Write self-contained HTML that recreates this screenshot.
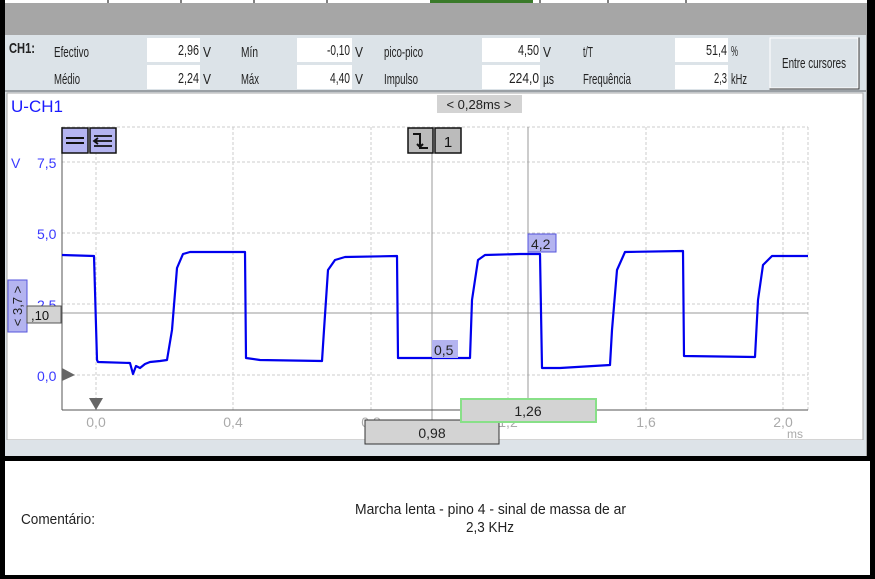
<!DOCTYPE html>
<html><head><meta charset="utf-8"><style>
body{margin:0;width:875px;height:579px;overflow:hidden;background:#fff}
svg{display:block}
.n{font-family:"Liberation Sans",sans-serif;font-size:15px;fill:#222}
.s{font-family:"Liberation Sans",sans-serif}
</style></head><body>
<svg width="875" height="579" viewBox="0 0 875 579" xmlns="http://www.w3.org/2000/svg">
<rect width="875" height="579" fill="#000"/>
<rect x="5" y="0" width="862" height="3" fill="#fff"/>
<g stroke="#000"><line x1="108" y1="0" x2="108" y2="3"/><line x1="181" y1="0" x2="181" y2="3"/><line x1="254" y1="0" x2="254" y2="3"/><line x1="327" y1="0" x2="327" y2="3"/><line x1="540" y1="0" x2="540" y2="3"/><line x1="608" y1="0" x2="608" y2="3"/><line x1="686" y1="0" x2="686" y2="3"/></g>
<rect x="430" y="0" width="103" height="3" fill="#3a7a2a"/>
<rect x="5" y="3" width="862" height="453" fill="#a6a6a6"/>
<rect x="5" y="35" width="861" height="421" fill="#dce3e8"/>
<rect x="5" y="90" width="861" height="2" fill="#9aa0a5"/>
<!-- panel -->
<text x="9" y="53" class="n" style="font-weight:bold" textLength="26" lengthAdjust="spacingAndGlyphs">CH1:</text>
<text x="54" y="57" class="n" textLength="35" lengthAdjust="spacingAndGlyphs">Efectivo</text><text x="54" y="84" class="n" textLength="26" lengthAdjust="spacingAndGlyphs">Médio</text>
<text x="241" y="57" class="n" textLength="17" lengthAdjust="spacingAndGlyphs">Mín</text><text x="241" y="84" class="n" textLength="18" lengthAdjust="spacingAndGlyphs">Máx</text>
<text x="384" y="57" class="n" textLength="39" lengthAdjust="spacingAndGlyphs">pico-pico</text><text x="384" y="84" class="n" textLength="34" lengthAdjust="spacingAndGlyphs">Impulso</text>
<text x="583" y="57" class="n" textLength="10" lengthAdjust="spacingAndGlyphs">t/T</text><text x="583" y="84" class="n" textLength="48" lengthAdjust="spacingAndGlyphs">Frequência</text>
<g fill="#fff"><rect x="147" y="38" width="53" height="24"/><rect x="147" y="65" width="53" height="24"/><rect x="297" y="38" width="55" height="24"/><rect x="297" y="65" width="55" height="24"/><rect x="482" y="38" width="58" height="24"/><rect x="482" y="65" width="58" height="24"/><rect x="675" y="38" width="53" height="24"/><rect x="675" y="65" width="53" height="24"/></g>
<g class="n" text-anchor="end"><text x="199" y="55" textLength="21" lengthAdjust="spacingAndGlyphs">2,96</text><text x="199" y="83" textLength="21" lengthAdjust="spacingAndGlyphs">2,24</text><text x="350" y="55" textLength="23" lengthAdjust="spacingAndGlyphs">-0,10</text><text x="350" y="83" textLength="20" lengthAdjust="spacingAndGlyphs">4,40</text><text x="539" y="55" textLength="21" lengthAdjust="spacingAndGlyphs">4,50</text><text x="539" y="83" textLength="30" lengthAdjust="spacingAndGlyphs">224,0</text><text x="727" y="55" textLength="21" lengthAdjust="spacingAndGlyphs">51,4</text><text x="727" y="83" textLength="13" lengthAdjust="spacingAndGlyphs">2,3</text></g>
<g class="n"><text x="203" y="57" textLength="8" lengthAdjust="spacingAndGlyphs">V</text><text x="203" y="84" textLength="8" lengthAdjust="spacingAndGlyphs">V</text><text x="355" y="57" textLength="8" lengthAdjust="spacingAndGlyphs">V</text><text x="355" y="84" textLength="8" lengthAdjust="spacingAndGlyphs">V</text><text x="543" y="57" textLength="8" lengthAdjust="spacingAndGlyphs">V</text><text x="543" y="84" textLength="11" lengthAdjust="spacingAndGlyphs">µs</text><text x="731" y="56" textLength="7" lengthAdjust="spacingAndGlyphs">%</text><text x="731" y="84" textLength="16" lengthAdjust="spacingAndGlyphs">kHz</text></g>
<rect x="770" y="38" width="89" height="51" fill="#dce3e8" stroke="#333"/>
<rect x="770" y="38" width="88" height="50" fill="#dce3e8" stroke="#fff"/>
<text x="782" y="68" class="n" textLength="64" lengthAdjust="spacingAndGlyphs">Entre cursores</text>
<!-- chart -->
<rect x="7" y="93" width="856" height="347" fill="#fff" stroke="#aaa"/>
<rect x="6" y="440" width="858" height="15" fill="#dde3e8"/>
<text x="11" y="112" class="s" font-size="17" fill="#1a1aff">U-CH1</text>
<rect x="437" y="95" width="85" height="18" fill="#d3d3d3"/>
<text x="479" y="109" class="s" font-size="13" fill="#222" text-anchor="middle">&lt; 0,28ms &gt;</text>
<g stroke="#ccc" stroke-dasharray="3,2" fill="none">
<line x1="62" y1="127" x2="808" y2="127"/>
<line x1="62" y1="162" x2="808" y2="162"/><line x1="62" y1="233" x2="808" y2="233"/><line x1="62" y1="304" x2="808" y2="304"/><line x1="62" y1="375" x2="808" y2="375"/>
<line x1="96" y1="127" x2="96" y2="410"/><line x1="233" y1="127" x2="233" y2="410"/><line x1="371" y1="127" x2="371" y2="410"/><line x1="508" y1="127" x2="508" y2="410"/><line x1="646" y1="127" x2="646" y2="410"/><line x1="783" y1="127" x2="783" y2="410"/><line x1="808" y1="127" x2="808" y2="410"/>
</g>
<g stroke="#999"><line x1="432" y1="127" x2="432" y2="440"/><line x1="528" y1="127" x2="528" y2="410"/><line x1="62" y1="313" x2="808" y2="313"/></g>
<path d="M62 410H808M62 127V410" stroke="#555" fill="none"/>
<g class="s" font-size="14" fill="#3a3aff"><text x="11" y="168">V</text><text x="37" y="168">7,5</text><text x="37" y="239">5,0</text><text x="37" y="310">2,5</text><text x="37" y="381">0,0</text></g>
<g class="s" font-size="14" fill="#aaa" text-anchor="middle"><text x="96" y="427">0,0</text><text x="233" y="427">0,4</text><text x="371" y="427">0,8</text><text x="508" y="427">1,2</text><text x="646" y="427">1,6</text><text x="783" y="427">2,0</text><text x="795" y="438" font-size="12">ms</text></g>
<path d="M62 255L94 256L97 360L98 362L130 363L133 374L136 366L140 368L145 364L150 362L160 361L167 360L172 330L177 268L183 254L190 252L245 252L246 358L260 360L322 361L324 330L328 270L335 260L345 257L397 256L398 358L470 358L472 300L478 260L485 255L520 254L540 254L542 368L560 368L610 365L612 330L617 270L625 252L683 251L684 356L755 357L758 300L763 265L772 256L808 256" stroke="#0000ee" stroke-width="2.2" fill="none" stroke-linejoin="round"/>
<!-- icons -->
<rect x="62" y="128" width="26" height="25" fill="#b4b4f0" stroke="#111" stroke-width="1.5"/>
<path d="M66 138H84M66 143H84" stroke="#111" stroke-width="2"/>
<rect x="90" y="128" width="26" height="25" fill="#b4b4f0" stroke="#111" stroke-width="1.5"/>
<path d="M94 136H112M94 141H112M94 146H112M98 138L94 141L98 144" stroke="#111" stroke-width="1.8" fill="none"/>
<rect x="408" y="128" width="25" height="25" fill="#bbb" stroke="#111" stroke-width="1.5"/>
<path d="M413 134H420V148H428M417 144L420 147L423 144" stroke="#111" stroke-width="2" fill="none"/>
<rect x="435" y="128" width="26" height="25" fill="#bbb" stroke="#111" stroke-width="1.5"/>
<text x="448" y="147" class="s" font-size="15" fill="#111" text-anchor="middle">1</text>
<rect x="8" y="280" width="19" height="52" fill="#b4b4f0" stroke="#5555dd"/>
<text transform="translate(22,306) rotate(-90)" class="s" font-size="13" fill="#222" text-anchor="middle">&lt; 3,7 &gt;</text>
<rect x="27" y="306" width="34" height="17" fill="#d3d3d3" stroke="#555"/>
<text x="31" y="320" class="s" font-size="13" fill="#111">,10</text>
<path d="M62 368L75 375L62 381Z" fill="#666"/>
<path d="M89 398H103L96 410Z" fill="#666"/>
<rect x="432" y="340" width="26" height="18" fill="#b4b4f0"/><text x="434" y="355" class="s" font-size="14" fill="#222">0,5</text>
<rect x="528" y="234" width="28" height="18" fill="#b4b4f0" stroke="#5555dd"/><text x="531" y="249" class="s" font-size="14" fill="#222">4,2</text>
<rect x="365" y="420" width="134" height="24" fill="#d3d3d3" stroke="#333"/>
<text x="432" y="438" class="s" font-size="14" fill="#222" text-anchor="middle">0,98</text>
<rect x="461" y="399" width="135" height="23" fill="#d3d3d3" stroke="#88e088" stroke-width="2"/>
<text x="528" y="416" class="s" font-size="14" fill="#222" text-anchor="middle">1,26</text>
<!-- comment -->
<rect x="5" y="461" width="865" height="114" fill="#fff"/>
<text x="21" y="524" class="n" font-size="15" textLength="74" lengthAdjust="spacingAndGlyphs">Comentário:</text>
<text x="355" y="514" class="n" font-size="15" textLength="271" lengthAdjust="spacingAndGlyphs">Marcha lenta - pino 4 - sinal de massa de ar</text>
<text x="490" y="532" class="n" font-size="15" text-anchor="middle" textLength="48" lengthAdjust="spacingAndGlyphs">2,3 KHz</text>
</svg>
</body></html>
